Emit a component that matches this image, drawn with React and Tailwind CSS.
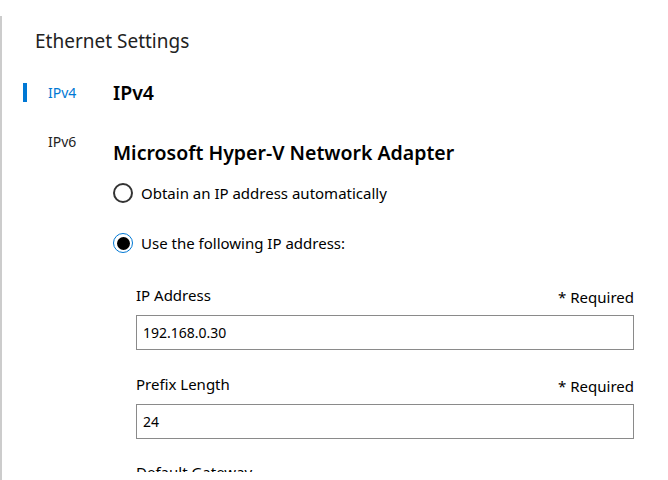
import React from "react";

const font = { fontFamily: '"Segoe UI", "Noto Sans", "Open Sans", sans-serif' };

function Radio({ checked, label }) {
  return (
    <div className="flex items-center gap-[8px]">
      {checked ? (
        <div className="w-[20px] h-[20px] rounded-full border border-[#0078d4] flex items-center justify-center bg-white">
          <div className="w-[13px] h-[13px] rounded-full bg-black" />
        </div>
      ) : (
        <div className="w-[20px] h-[20px] rounded-full border-2 border-[#333]" />
      )}
      <span className="text-[15px] text-black leading-[20px]">{label}</span>
    </div>
  );
}

function Field({ label, value }) {
  return (
    <div className="flex flex-col">
      <div className="flex justify-between items-end h-[24px]">
        <span className="text-[15px] text-black leading-[20px]">{label}</span>
        <span className="text-[15px] text-black leading-[20px] translate-y-[2px]">* Required</span>
      </div>
      <div className="mt-[10px] h-[35px] border border-[#8a8a8a] flex items-center px-[6px] text-[14px] text-black">
        {value}
      </div>
    </div>
  );
}

export default function App() {
  return (
    <div style={font} className="w-[668px] h-[480px] overflow-hidden bg-white pt-[16px] flex">
      <div className="flex-1 border-l-2 border-[#cccccc] flex flex-col">
        <div className="pl-[33px] pt-[12px] text-[19px] leading-[26px] text-[#222]">Ethernet Settings</div>
        <div className="flex mt-[22px] pt-[3px] h-[396px] overflow-hidden">
          <div className="w-[111px] flex flex-col pl-[21px]">
            <div className="flex items-center h-[19px] mt-[4px]">
              <div className="w-[4px] h-[19px] bg-[#0078d4]" />
              <span className="ml-[21px] text-[14px] text-[#0078d4]">IPv4</span>
            </div>
            <div className="flex items-center h-[19px] mt-[30px]">
              <div className="w-[4px] h-[19px]" />
              <span className="ml-[21px] text-[14px] text-[#222]">IPv6</span>
            </div>
          </div>
          <div className="flex-1 pr-[34px] flex flex-col">
            <div className="text-[19.5px] font-semibold leading-[28px] text-black">IPv4</div>
            <div className="mt-[33px] text-[19.5px] font-semibold leading-[26px] text-black">
              Microsoft Hyper-V Network Adapter
            </div>
            <div className="mt-[17px]">
              <Radio label="Obtain an IP address automatically" />
            </div>
            <div className="mt-[30px]">
              <Radio checked label="Use the following IP address:" />
            </div>
            <div className="pl-[23px] mt-[28px] flex flex-col gap-[20px]">
              <Field label="IP Address" value="192.168.0.30" />
              <Field label="Prefix Length" value="24" />
              <div className="mt-[3px] text-[15px] text-black leading-[20px]">Default Gateway</div>
            </div>
          </div>
        </div>
      </div>
    </div>
  );
}
